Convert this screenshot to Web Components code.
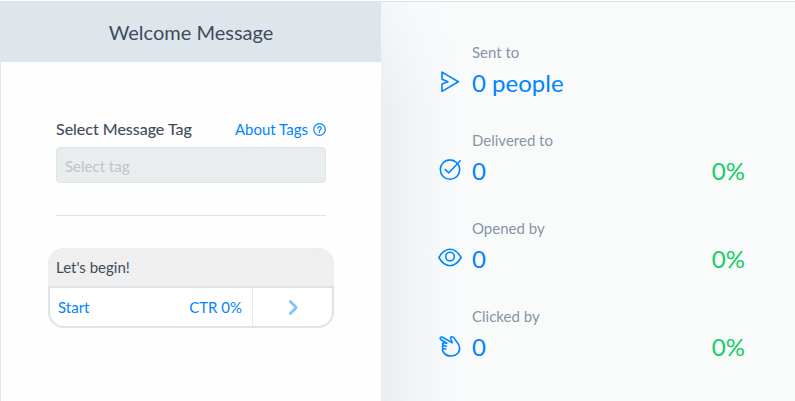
<!DOCTYPE html>
<html lang="en">
<head>
<meta charset="utf-8">
<title>Welcome Message</title>
<style>
html,body{margin:0;height:100%;overflow:hidden;background:#fff}
body{font-family:Lato,"Liberation Sans",sans-serif;color:#3f4b5c;font-size:15px}
</style>
</head>
<body>
<message-report></message-report>
<script>
const define = (name, html, setup) => customElements.define(name, class extends HTMLElement {
  connectedCallback() {
    if (this.shadowRoot) return;
    const t = document.createElement('template');
    t.innerHTML = html;
    this.attachShadow({mode: 'open'}).append(t.content.cloneNode(true));
    if (setup) setup(this, this.shadowRoot);
  }
});

const icons = {
  send: '<path d="M4 2.1V9.300L10 11.700 4 13.900V21.400L20.400 11.700Z"/>',
  check: '<circle cx="12" cy="11.600" r="9.700"/><path d="M7.200 11.600l3.600 3.200L22.200 2.800"/>',
  eye: '<path d="M.9 11.500C3.500 6.900 7.300 3.300 12 3.300s8.500 3.600 11.100 8.200C20.500 16.100 16.700 19.700 12 19.700S3.500 16.100.9 11.500Z"/><circle cx="12" cy="10.600" r="4.300"/>',
  hand: '<path d="M13.200 8.100 4.400 3.200C2.500 2.300 1.200 4.700 3 5.700L8.800 9.300M8.800 9.300 6.300 8.700C4.300 8.400 3.900 11 5.700 11.500L8.300 12.200M6 11.600C4 11.700 3.800 14 5.600 14.500L7.700 15M5.700 14.500C4.200 14.900 4.100 16.500 5 17.500 6.700 20.600 9.500 22.300 13.500 22 19 21.700 22.400 17.800 21.500 13.200 20.800 9.400 17.800 7 15.900 3.900 14.800 2 12.200 2.500 12.700 4.500L14.200 8.700"/>',
  help: '<circle cx="12" cy="12" r="10.700"/><path d="M9 9.600C9 5.700 15.200 5.900 15.200 9.600 15.200 11.800 12 11.900 12 14.300M12 17v1"/>',
  chevron: '<path d="M7.500 3.500 16 12l-8.500 8.500"/>'
};

define('line-icon', `<style>
:host{display:block;flex:none;width:24px;height:24px}
svg{display:block;width:100%;height:100%;fill:none;stroke:currentColor;stroke-width:var(--stroke,1.6);stroke-linejoin:round;stroke-linecap:round}
</style><svg viewBox="0 0 24 24"></svg>`, (el, root) => {
  root.querySelector('svg').innerHTML = icons[el.getAttribute('name')];
});

define('panel-title', `<style>
:host{display:flex;flex:none;height:60px;align-items:center;justify-content:center;background:#dfe6eb;font-size:20px;line-height:24px;box-sizing:border-box}
</style><slot></slot>`);

define('tag-select', `<style>
:host{display:block}
.head{display:flex;justify-content:space-between;align-items:center;height:20px;line-height:20px}
.label{font-size:16px;-webkit-text-stroke:.15px currentColor}
.about{display:flex;align-items:center;gap:5px;color:#0084ff;font-size:15px}
line-icon{width:13px;height:13px;--stroke:2.2;margin-top:1px}
.field{margin-top:8px;height:36px;box-sizing:border-box;border:1px solid #dce5ea;border-radius:4px;background:#e9edee;color:#bdc4cf;padding:1px 8px 0;line-height:34px}
</style>
<div class="head"><span class="label">Select Message Tag</span><span class="about"><span>About Tags</span><line-icon name="help"></line-icon></span></div>
<div class="field">Select tag</div>`);

define('message-card', `<style>
:host{display:block;width:286px;height:80px;border-radius:16px;overflow:hidden;background:#dce4ea}
.text{height:38px;line-height:38px;padding-left:8px;background:#efefef}
.action{display:flex;height:38px;margin:2px 2px 0;border-radius:0 0 14px 14px;background:#fff;color:#0084ff;line-height:38px}
.link{display:flex;justify-content:space-between;flex:1;padding:0 10px 0 8px}
.next{display:flex;align-items:center;justify-content:center;width:78px;padding-left:1px;border-left:1px solid #e4ebef;color:#80c1ff}
line-icon{width:17px;height:17px;--stroke:3.8}
</style>
<div class="text"><slot></slot></div>
<div class="action"><div class="link"><slot name="button"></slot><slot name="rate"></slot></div><div class="next"><line-icon name="chevron"></line-icon></div></div>`);

define('stat-row', `<style>
:host{display:grid;grid-template-columns:34px 1fr auto;grid-template-rows:20px 42px;height:88px;align-content:start}
.label{grid-column:2/4;color:#8794a7;line-height:20px}
line-icon{color:#0084ff;margin-top:8px}
.value,.rate{font-size:24px;line-height:42px}
.value{color:#0084ff}
.rate{color:#13ce66}
</style>
<span class="label"></span><line-icon></line-icon><span class="value"></span><span class="rate"></span>`, (el, root) => {
  for (const k of ['label', 'value', 'rate']) root.querySelector('.' + k).textContent = el.getAttribute(k) || '';
  const old = root.querySelector('line-icon'), icon = document.createElement('line-icon');
  icon.setAttribute('name', el.getAttribute('icon'));
  old.replaceWith(icon);
});

define('message-report', `<style>
:host{display:flex;box-sizing:border-box;height:401px;padding-top:1px}
.left{width:381px;flex:none;box-sizing:border-box;border-left:1px solid #e2e8ed;border-top:1px solid #dae3ea;background:#fefefe}
.body{padding:57px 55px 0 55px}
hr{border:0;height:1px;background:#dce5ea;margin:32px 0}
message-card{margin-left:-8px}
.right{flex:1;box-sizing:border-box;border-top:1px solid #dae3ea;padding:40px 50px 0 57px;background:linear-gradient(180deg,rgba(249,251,251,.65),rgba(249,251,251,0) 110px),linear-gradient(90deg,#ebedf1 0,#f4f5f8 40px,#f9fafb 80px,#f9fbfb 90px)}
</style>
<section class="left"><panel-title>Welcome Message</panel-title>
<div class="body"><tag-select></tag-select><hr><message-card>Let's begin!<span slot="button">Start</span><span slot="rate">CTR 0%</span></message-card></div></section>
<section class="right">
<stat-row icon="send" label="Sent to" value="0 people"></stat-row>
<stat-row icon="check" label="Delivered to" value="0" rate="0%"></stat-row>
<stat-row icon="eye" label="Opened by" value="0" rate="0%"></stat-row>
<stat-row icon="hand" label="Clicked by" value="0" rate="0%"></stat-row>
</section>`);
</script>
</body>
</html>
